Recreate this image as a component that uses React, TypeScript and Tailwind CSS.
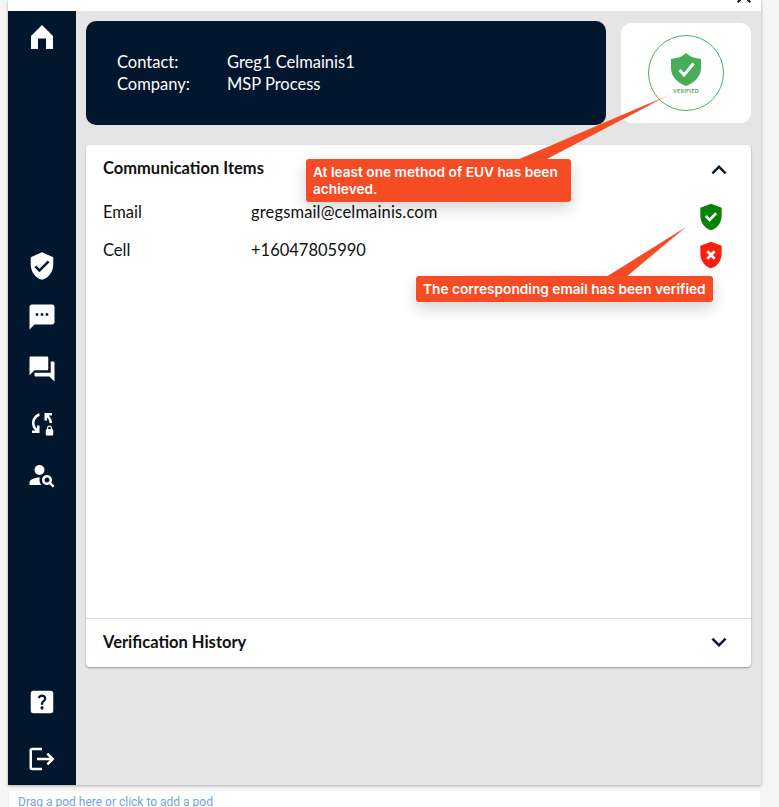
import { MdVerifiedUser, MdSms, MdForum, MdSyncLock, MdPersonSearch, MdHelpCenter, MdLogout, MdGppGood, MdGppBad, MdExpandLess, MdExpandMore, MdClose } from "react-icons/md";

function HomeIcon() {
  return (
    <svg viewBox="0 0 22 24" className="w-[22px] h-[24px] fill-white">
      <path d="M11 0 L22 11 V24 H15 V13.5 H7 V24 H0 V11 Z" />
    </svg>
  );
}

function Tip({ className, children }: { className: string; children: React.ReactNode }) {
  return (
    <div className={"absolute bg-[#f64c25] text-white rounded-[3px] px-[7px] font-['Inter',sans-serif] font-semibold text-[13.7px] leading-[17px] shadow-[0_6px_16px_rgba(0,0,0,0.18)] " + className}>
      {children}
    </div>
  );
}

export default function App() {
  return (
    <div className="relative w-[779px] h-[807px] overflow-hidden bg-[#f5f5f5] font-['Lato',sans-serif]">
      <div className="ml-2 w-[753px] h-[785px] flex flex-col shadow-[0_1px_3px_rgba(0,0,0,0.3)]">
        <div className="h-[11px] bg-white overflow-hidden flex justify-end pr-[5px] shrink-0">
          <MdClose className="text-[#111] -mt-[16px]" size={24} />
        </div>
        <div className="flex flex-1 min-h-0">
          <nav className="w-[68px] bg-[#02162e] text-white flex flex-col items-center pt-[11px] pb-[11px] shrink-0">
            <div className="h-[30px] flex items-center"><HomeIcon /></div>
            <MdVerifiedUser size={30} className="mt-[199px]" />
            <MdSms size={30} className="mt-[21px]" />
            <MdForum size={30} className="mt-[22px]" />
            <MdSyncLock size={30} className="mt-[24px]" />
            <MdPersonSearch size={30} className="mt-[22px]" />
            <MdHelpCenter size={30} className="mt-auto" />
            <MdLogout size={30} className="mt-[27px]" />
          </nav>
          <main className="flex-1 bg-[#e5e5e5] px-[10px] pt-[10px]">
            <div className="flex items-center justify-between">
              <section className="w-[520px] h-[104px] bg-[#02162e] rounded-[10px] text-white pl-[31px] pt-[30px] text-[16.5px] leading-[22px]">
                <div className="flex"><span className="w-[110px]">Contact:</span><span>Greg1 Celmainis1</span></div>
                <div className="flex"><span className="w-[110px]">Company:</span><span>MSP Process</span></div>
              </section>
              <section className="w-[130px] h-[100px] bg-white rounded-[10px] flex items-center justify-center">
                <div className="w-[76px] h-[76px] rounded-full border-[1.5px] border-[#4caf5f] flex flex-col items-center pt-[17px]">
                  <svg viewBox="0 0 30 33" className="w-[30px] h-[33px]">
                    <path d="M15 0 C19 4 24 5 30 6 V15 C30 24 23 30 15 33 C7 30 0 24 0 15 V6 C6 5 11 4 15 0 Z" fill="#48ad58" />
                    <path d="M8.5 17 L13 22 L22.5 10.5" fill="none" stroke="#fff" strokeWidth="3" />
                  </svg>
                  <span className="mt-[1px] text-[5.5px] leading-[8px] tracking-[0.2px] font-bold text-[#5fa56c]">VERIFIED</span>
                </div>
              </section>
            </div>
            <section className="mt-[20px] h-[522px] bg-white rounded-[4px] shadow-[0_1px_2px_rgba(0,0,0,0.35)] flex flex-col text-[#111]">
              <div className="flex-1 px-[17px] pt-[11px]">
                <div className="flex items-center justify-between h-[24px]">
                  <h2 className="text-[16.5px] font-bold mt-[1px]">Communication Items</h2>
                  <MdExpandLess size={30} className="text-[#0b1a30] mt-[3px]" />
                </div>
                <div className="flex items-center mt-[20px] h-[24px] text-[16.5px]">
                  <span className="w-[148px]">Email</span>
                  <span className="flex-1 tracking-[0.15px]">gregsmail@celmainis.com</span>
                  <MdGppGood size={32} className="text-[#078207] mr-[7px] mt-[9px]" />
                </div>
                <div className="flex items-center mt-[14px] h-[24px] text-[16.5px]">
                  <span className="w-[148px]">Cell</span>
                  <span className="flex-1">+16047805990</span>
                  <MdGppBad size={32} className="text-[#fa1f0c] mr-[7px] mt-[9px]" />
                </div>
              </div>
              <div className="h-[49px] border-t border-[#dedede] px-[17px] pb-[1px] flex items-center justify-between shrink-0">
                <h2 className="text-[16.5px] font-bold">Verification History</h2>
                <MdExpandMore size={30} className="text-[#0b1a30] mb-[1px]" />
              </div>
            </section>
          </main>
        </div>
      </div>
      <div className="ml-[9px] mt-[6px] w-[751px] h-[16px] bg-white pl-[9px] font-['Roboto',sans-serif] text-[12px] leading-[22px] text-[#6ea8e0]">
        Drag a pod here or click to add a pod
      </div>

      <svg className="absolute left-[500px] top-[90px] w-[190px] h-[190px] pointer-events-none" viewBox="500 90 190 190">
        <defs>
          <linearGradient id="fade1" x1="671" y1="95" x2="600" y2="125" gradientUnits="userSpaceOnUse">
            <stop offset="0" stopColor="#f64c25" stopOpacity="0.2" />
            <stop offset="0.35" stopColor="#f64c25" />
          </linearGradient>
        </defs>
        <polygon points="671,94 517,160 545,160" fill="url(#fade1)" />
        <polygon points="686,227 606,277 626,277" fill="#f64c25" />
      </svg>
      <Tip className="left-[306px] top-[159px] w-[265px] h-[43px] pt-[5px]">At least one method of EUV has been achieved.</Tip>
      <Tip className="left-[416px] top-[276px] w-[297px] h-[26px] pt-[5px] whitespace-nowrap">The corresponding email has been verified</Tip>
    </div>
  );
}
